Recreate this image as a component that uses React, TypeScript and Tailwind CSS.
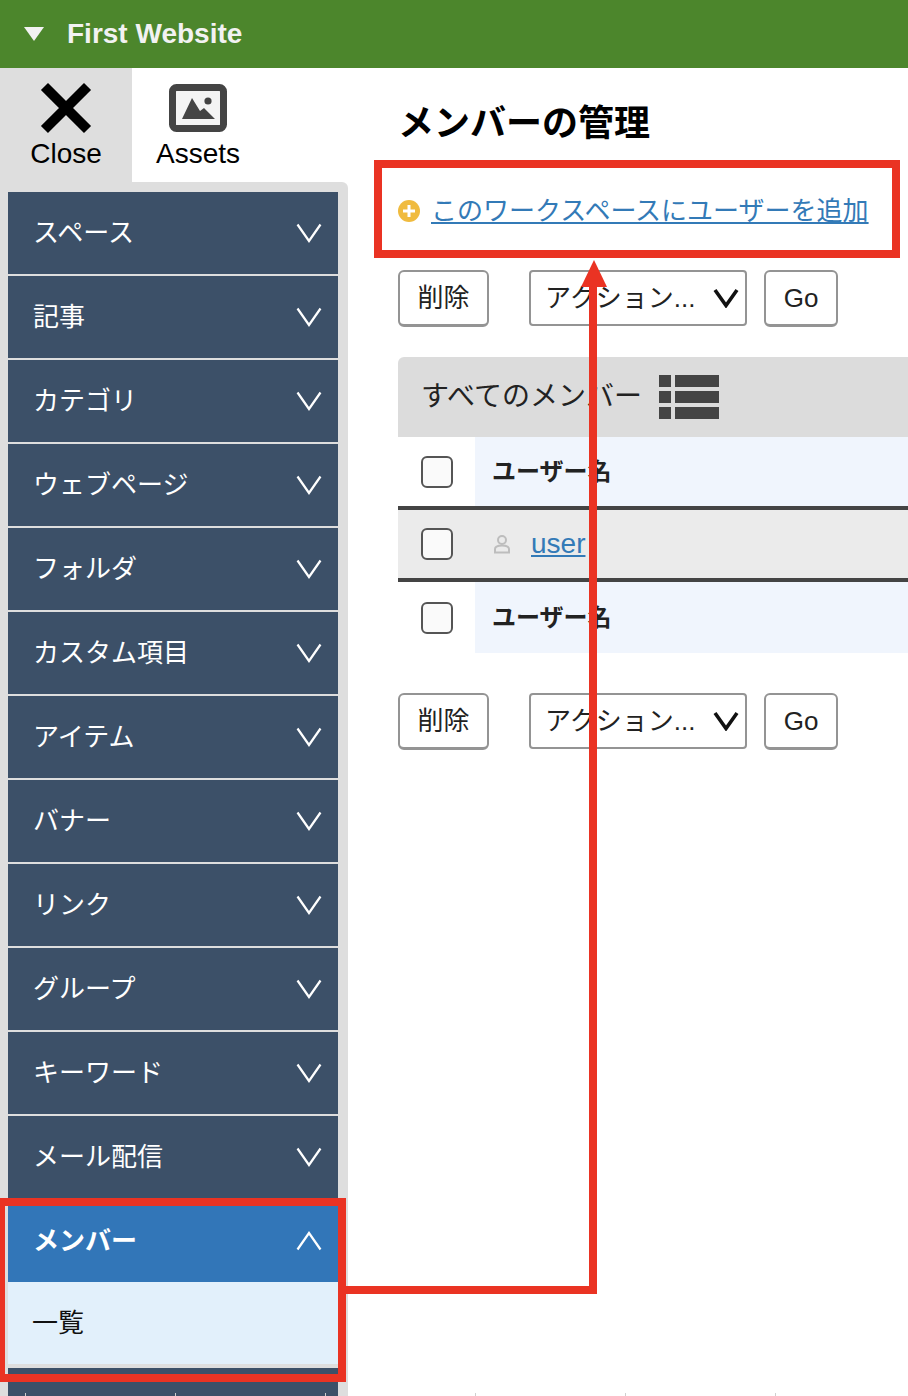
const font = "[font-family:'Liberation_Sans','Noto_Sans_CJK_JP',sans-serif]";

const menu = [
  "スペース",
  "記事",
  "カテゴリ",
  "ウェブページ",
  "フォルダ",
  "カスタム項目",
  "アイテム",
  "バナー",
  "リンク",
  "グループ",
  "キーワード",
  "メール配信",
];

const ticks = [25, 175, 325, 475, 625, 775];

function Chevron({ up = false }: { up?: boolean }) {
  return (
    <svg width="26" height="20" viewBox="0 0 26 20" fill="none" className={up ? "rotate-180" : ""}>
      <path d="M1.5 1.5 13 18 24.5 1.5" stroke="white" strokeWidth="2.2" />
    </svg>
  );
}

function Actions() {
  return (
    <div className="flex h-[57px] items-stretch">
      <button className="w-[91px] h-[57px] rounded-[6px] border-2 border-[#949494] border-b-[3px] bg-white text-[26px] text-[#222]">
        削除
      </button>
      <div className="ml-[40px] flex h-[56px] w-[218px] items-center rounded-[4px] border-2 border-[#949494] bg-white pl-[14px] text-[26px] text-[#222]">
        <span>アクション...</span>
        <svg width="26" height="20" viewBox="0 0 26 20" fill="none" className="ml-[18px]">
          <path d="M2 2 13 17.5 24 2" stroke="#111" strokeWidth="3.6" />
        </svg>
      </div>
      <button className="ml-[17px] w-[74px] h-[57px] rounded-[6px] border-2 border-[#949494] border-b-[3px] bg-white text-[26px] text-[#222]">
        Go
      </button>
    </div>
  );
}

function Checkbox() {
  return <div className="h-[32px] w-[32px] rounded-[6px] border-2 border-[#555] bg-[#fafafa]" />;
}

function HeadRow() {
  return (
    <div className="flex h-full">
      <div className="flex w-[77px] shrink-0 items-center justify-center pr-[0px] pl-[0px]">
        <Checkbox />
      </div>
      <div className="flex flex-1 items-center bg-[#f0f5fd] pl-[17px] text-[24px] font-bold text-[#222]">ユーザー名</div>
    </div>
  );
}

export default function App() {
  return (
    <div className={`relative h-[1396px] w-[908px] overflow-hidden bg-white ${font}`}>
      {/* Site bar */}
      <div className="flex h-[68px] items-center bg-[#4c862c] pl-[24px]">
        <svg width="20" height="14" viewBox="0 0 20 14">
          <path d="M0 0H20L10 14Z" fill="#f2f2f2" />
        </svg>
        <span className="ml-[23px] text-[28px] font-bold text-[#f2f2f2]">First Website</span>
      </div>

      <div className="flex">
        {/* Left column */}
        <div className="w-[348px] shrink-0">
          <div className="flex h-[114px]">
            <div className="flex w-[132px] flex-col items-center bg-[#dedede] pt-[14px]">
              <svg width="52" height="52" viewBox="0 0 52 52">
                <path d="M8 8 44 44M44 8 8 44" stroke="#000" strokeWidth="10" strokeLinecap="square" />
              </svg>
              <span className="mt-[4px] text-[28px] leading-[32px] text-black">Close</span>
            </div>
            <div className="flex w-[132px] flex-col items-center pt-[16px]">
              <svg width="58" height="48" viewBox="0 0 58 48">
                <rect x="3.5" y="3.5" width="51" height="41" rx="4" fill="#f4f4f4" stroke="#444" strokeWidth="7" />
                <path d="M13 35 23 14 31 27 35 24 46 35Z" fill="#444" />
                <circle cx="39" cy="17" r="3.6" fill="#444" />
              </svg>
              <span className="mt-[6px] text-[28px] leading-[32px] text-black">Assets</span>
            </div>
          </div>

          <div className="h-[1300px] rounded-tr-[6px] bg-[#dedede] px-[8px] pr-[10px] pt-[10px]">
            <div className="flex flex-col gap-[2px]">
              {menu.map((m) => (
                <div key={m} className="flex h-[82px] items-center justify-between bg-[#3c5068] pl-[25px] pr-[16px] text-[26px] text-white">
                  <span>{m}</span>
                  <Chevron />
                </div>
              ))}
              <div className="flex h-[82px] items-center justify-between bg-[#3276b8] pl-[25px] pr-[16px] text-[26px] font-bold text-white">
                <span>メンバー</span>
                <Chevron up />
              </div>
            </div>
            <div className="flex h-[82px] items-center bg-[#e2f0fb] pl-[24px] text-[26px] text-[#111]">一覧</div>
            <div className="mt-[4px] h-[60px] bg-[#3c5068]" />
          </div>
        </div>

        {/* Main */}
        <div className="w-[560px] shrink-0 overflow-hidden pl-[50px]">
          <h1 className="mt-[32px] h-[48px] text-[36px] font-bold leading-[48px] text-black">メンバーの管理</h1>
          <div className="mt-[48px] flex h-[30px] items-center">
            <svg width="22" height="22" viewBox="0 0 22 22">
              <circle cx="11" cy="11" r="11" fill="#f0bb3f" />
              <path d="M5 11H17M11 5V17" stroke="white" strokeWidth="3" />
            </svg>
            <a className="ml-[11px] text-[26px] leading-[30px] text-[#337ab7] underline underline-offset-2">
              このワークスペースにユーザーを追加
            </a>
          </div>

          <div className="mt-[44px]">
            <Actions />
          </div>

          <div className="mt-[30px] flex h-[80px] items-center rounded-tl-[6px] bg-[#dcdcdc] pl-[23px] text-[28px] text-[#222]">
            <span>すべてのメンバー</span>
            <svg width="60" height="44" viewBox="0 0 60 44" className="ml-[17px]">
              <path d="M0 0H12V12H0ZM16 0H60V12H16ZM0 16H12V28H0ZM16 16H60V28H16ZM0 32H12V44H0ZM16 32H60V44H16Z" fill="#444" />
            </svg>
          </div>

          <div className="h-[69px]">
            <HeadRow />
          </div>
          <div className="flex h-[76px] items-center border-y-4 border-[#444] bg-[#ebebeb]">
            <div className="flex w-[77px] shrink-0 justify-center">
              <Checkbox />
            </div>
            <svg width="16" height="20" viewBox="0 0 16 20" className="ml-[19px]" fill="none">
              <circle cx="8" cy="6" r="4" stroke="#bdbdbd" strokeWidth="2" />
              <path d="M1 18.5V15C1 12.5 4 11.5 8 11.5S15 12.5 15 15V18.5Z" stroke="#bdbdbd" strokeWidth="2" />
            </svg>
            <a className="ml-[21px] text-[28px] text-[#337ab7] underline underline-offset-2">user</a>
          </div>
          <div className="h-[71px]">
            <HeadRow />
          </div>

          <div className="mt-[40px]">
            <Actions />
          </div>
        </div>
      </div>

      {/* Screenshot annotation */}
      <svg width="908" height="1396" viewBox="0 0 908 1396" fill="none" className="pointer-events-none absolute left-0 top-0">
        <rect x="378" y="164" width="518" height="90" stroke="#ea3323" strokeWidth="8" />
        <rect x="1" y="1202" width="341" height="176" stroke="#ea3323" strokeWidth="8" />
        <path d="M346 1290H593V280" stroke="#ea3323" strokeWidth="8" />
        <path d="M594 260 607 287H581Z" fill="#ea3323" />
      </svg>

      {/* Cut-off marks on the bottom edge */}
      <div className="absolute bottom-0 left-0 h-[3px] w-full">
        {ticks.map((x) => (
          <span key={x} className="absolute bottom-0 h-[3px] w-[1px] bg-[#cfcfcf]" style={{ left: x }} />
        ))}
      </div>
    </div>
  );
}
